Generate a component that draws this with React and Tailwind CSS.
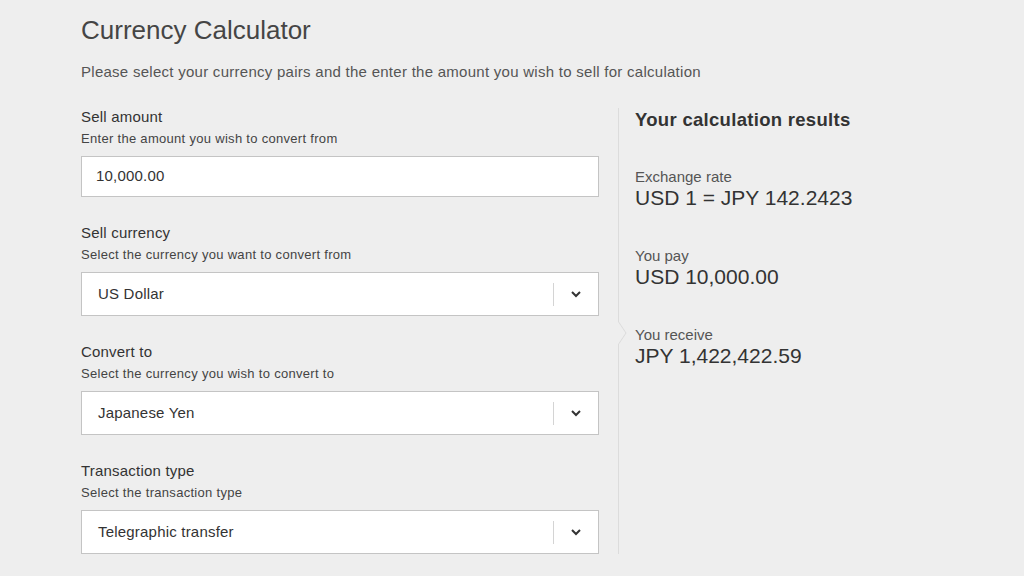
import React from "react";

const font = { fontFamily: '"Liberation Sans", Arial, sans-serif' };

function Chevron() {
  return (
    <svg width="12" height="8" viewBox="0 0 12 8" className="block">
      <path d="M2 2 L6 6 L10 2" fill="none" stroke="#333" strokeWidth="2" />
    </svg>
  );
}

function Field({ label, help, children, first }) {
  return (
    <div className={first ? "" : "mt-[27px]"}>
      <div className="text-[15px] leading-[18px] tracking-[0.2px] text-[#333]">{label}</div>
      <div className="mt-[5px] text-[13px] leading-[16px] tracking-[0.3px] text-[#444]">{help}</div>
      {children}
    </div>
  );
}

function Select({ value }) {
  return (
    <div className="mt-[9px] flex h-[44px] items-center border border-[#c4c4c4] bg-white">
      <div className="flex-1 pl-[16px] text-[15px] tracking-[0.2px] text-[#333]">{value}</div>
      <div className="h-[23px] w-px bg-[#d4d4d4]" />
      <div className="flex w-[44px] items-center justify-center">
        <Chevron />
      </div>
    </div>
  );
}

function Result({ label, value }) {
  return (
    <div className="mt-[37px]">
      <div className="text-[15px] leading-[18px] text-[#555]">{label}</div>
      <div className="text-[21px] leading-[24px] text-[#333]">{value}</div>
    </div>
  );
}

export default function App() {
  return (
    <div style={font} className="h-[576px] w-[1024px] overflow-hidden bg-[#eeeeee] pl-[81px]">
      <h1 className="pt-[15px] text-[26px] font-light leading-[30px] text-[#454545]">
        Currency Calculator
      </h1>
      <p className="mt-[18px] text-[15px] leading-[18px] tracking-[0.27px] text-[#555]">
        Please select your currency pairs and the enter the amount you wish to sell for calculation
      </p>
      <div className="mt-[27px] flex">
        <div className="w-[518px]">
          <Field label="Sell amount" help="Enter the amount you wish to convert from" first>
            <div className="mt-[9px] flex h-[41px] items-center border border-[#c4c4c4] bg-white pl-[14px] text-[15px] tracking-[0.2px] text-[#333]">
              10,000.00
            </div>
          </Field>
          <Field label="Sell currency" help="Select the currency you want to convert from">
            <Select value="US Dollar" />
          </Field>
          <Field label="Convert to" help="Select the currency you wish to convert to">
            <Select value="Japanese Yen" />
          </Field>
          <Field label="Transaction type" help="Select the transaction type">
            <Select value="Telegraphic transfer" />
          </Field>
        </div>
        <div className="relative ml-[19px] w-px self-stretch bg-[#dcdcdc]">
          <svg width="9" height="24" viewBox="0 0 9 24" className="absolute left-0 top-[213px]">
            <path d="M0 0 L8 12 L0 24" fill="#eeeeee" stroke="#dcdcdc" strokeWidth="1" />
          </svg>
        </div>
        <div className="pl-[16px]">
          <div className="pt-[1px] text-[18.5px] font-bold leading-[22px] tracking-[0.3px] text-[#333]">
            Your calculation results
          </div>
          <Result label="Exchange rate" value="USD 1 = JPY 142.2423" />
          <Result label="You pay" value="USD 10,000.00" />
          <Result label="You receive" value="JPY 1,422,422.59" />
        </div>
      </div>
    </div>
  );
}
